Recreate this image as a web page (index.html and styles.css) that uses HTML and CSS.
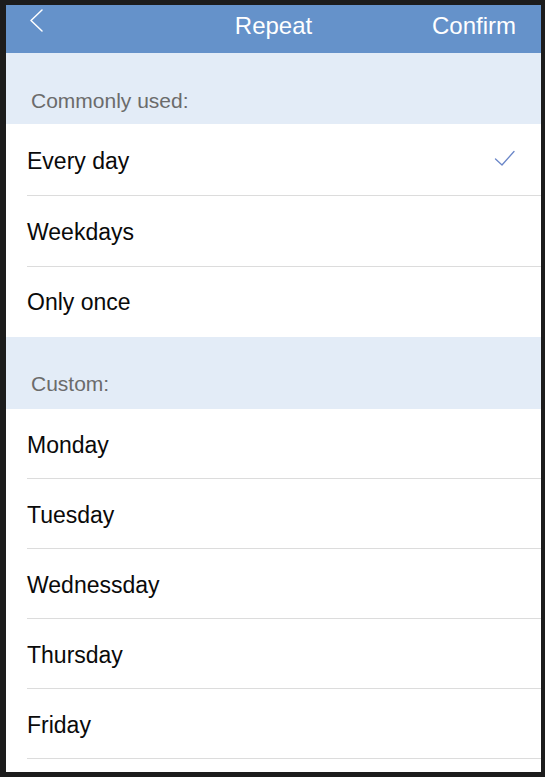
FILE: index.html
```html
<!DOCTYPE html>
<html lang="en">
<head>
<meta charset="utf-8">
<title>Repeat</title>
<link rel="stylesheet" href="styles.css">
</head>
<body>
<div class="frame">
  <header class="topbar">
    <span class="back">
      <svg width="14" height="24" viewBox="0 0 14 24"><polyline points="12,1 1,11.5 12,22" fill="none" stroke="#ffffff" stroke-width="1.5" stroke-linecap="round" stroke-linejoin="round"/></svg>
    </span>
    <span class="title">Repeat</span>
    <span class="confirm">Confirm</span>
  </header>

  <div class="section-label">Commonly used:</div>
  <ul class="list list--common">
    <li class="row"><span>Every day</span>
      <svg class="check" width="22" height="18" viewBox="0 0 22 18"><polyline points="1.5,9 8,15 20,1.5" fill="none" stroke="#6a86c8" stroke-width="1.3" stroke-linecap="round" stroke-linejoin="round"/></svg>
    </li>
    <li class="row"><span>Weekdays</span></li>
    <li class="row row--last"><span>Only once</span></li>
  </ul>

  <div class="section-label section-label--custom">Custom:</div>
  <ul class="list">
    <li class="row"><span>Monday</span></li>
    <li class="row"><span>Tuesday</span></li>
    <li class="row"><span>Wednessday</span></li>
    <li class="row"><span>Thursday</span></li>
    <li class="row"><span>Friday</span></li>
  </ul>
</div>
</body>
</html>
```

FILE: styles.css
```css
html, body {
  margin: 0;
  padding: 0;
  background: #ffffff;
}

body {
  font-family: "Liberation Sans", Arial, sans-serif;
}

.frame {
  width: 545px;
  height: 777px;
  box-sizing: border-box;
  border-style: solid;
  border-color: #1c1c1c;
  border-width: 5px 4px 5px 6px;
  background: #ffffff;
  overflow: hidden;
}

.topbar {
  height: 48px;
  box-sizing: border-box;
  background: #6592ca;
  color: #ffffff;
  display: flex;
  align-items: center;
  justify-content: space-between;
  padding: 0 25px 6px 24px;
  position: relative;
  font-size: 24px;
}

.back {
  display: flex;
  align-self: flex-start;
  margin-top: 4px;
}

.title {
  position: absolute;
  left: 0;
  right: 0;
  text-align: center;
  pointer-events: none;
}

.confirm {
  position: relative;
}

.section-label {
  height: 71px;
  box-sizing: border-box;
  background: #e3ecf7;
  color: #6b6b6b;
  font-size: 21px;
  display: flex;
  align-items: flex-end;
  padding: 0 0 11px 25px;
}

.section-label--custom {
  height: 72px;
  padding-bottom: 13px;
}

.list {
  list-style: none;
  margin: 0;
  padding: 0;
  background: #ffffff;
}

.row {
  height: 70px;
  box-sizing: border-box;
  margin-left: 21px;
  padding: 3px 25px 0 0;
  border-bottom: 1px solid #dcdcdc;
  display: flex;
  align-items: center;
  justify-content: space-between;
  font-size: 23px;
  color: #0a0a0a;
}

.list--common .row {
  height: 71px;
}

.list--common .row:first-child {
  height: 72px;
}

.list--common .row--last {
  height: 70px;
  padding-top: 0;
  border-bottom: none;
}

.check {
  display: block;
  margin-top: -5px;
}
```
